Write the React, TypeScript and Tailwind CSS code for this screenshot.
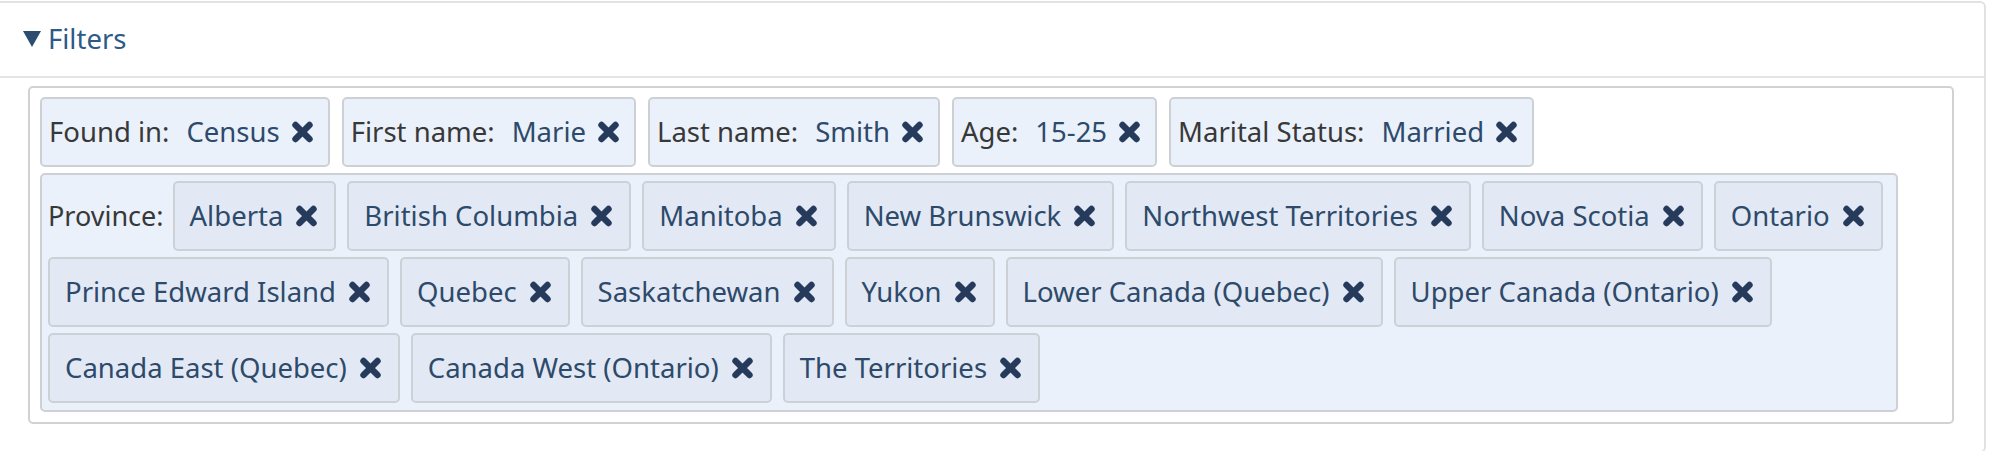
import React from 'react';

const RemoveIcon = () => (
  <svg width="23" height="22" viewBox="0 0 23 22" className="shrink-0">
    <path d="M4.5 4 L18.5 18 M18.5 4 L4.5 18" stroke="#263b5c" strokeWidth="6.4" strokeLinecap="round" fill="none" />
  </svg>
);

const fieldFilters = [
  { label: 'Found in:', value: 'Census' },
  { label: 'First name:', value: 'Marie' },
  { label: 'Last name:', value: 'Smith' },
  { label: 'Age:', value: '15-25' },
  { label: 'Marital Status:', value: 'Married' },
];

const provinces = [
  'Alberta',
  'British Columbia',
  'Manitoba',
  'New Brunswick',
  'Northwest Territories',
  'Nova Scotia',
  'Ontario',
  'Prince Edward Island',
  'Quebec',
  'Saskatchewan',
  'Yukon',
  'Lower Canada (Quebec)',
  'Upper Canada (Ontario)',
  'Canada East (Quebec)',
  'Canada West (Ontario)',
  'The Territories',
];

const FieldChip = ({ label, value }: { label: string; value: string }) => (
  <div className="h-[70px] flex items-center pl-[7px] pr-[14px] bg-[#eaf1fb] border-2 border-[#cdd1d6] rounded-[5px] whitespace-nowrap">
    <span className="text-[#383838]">{label}</span>
    <span className="ml-[17px] text-[#2e4a6b]">{value}</span>
    <span className="ml-[11px]">
      <RemoveIcon />
    </span>
  </div>
);

const ProvinceChip = ({ name }: { name: string }) => (
  <div className="h-[70px] flex items-center pl-[15px] pr-[16px] bg-[#e2e9f4] border-2 border-[#cdd1d6] rounded-[5px] whitespace-nowrap">
    <span className="text-[#2e4a6b]">{name}</span>
    <span className="ml-[12px]">
      <RemoveIcon />
    </span>
  </div>
);

export default function App() {
  return (
    <div className="w-[1999px] h-[451px] overflow-hidden bg-white pt-px pr-[13px] font-['Noto_Sans','Open_Sans',sans-serif] text-[27.5px]">
      <div className="h-[452px] border-2 border-l-0 border-[#e2e2e2] rounded-r-[6px] flex flex-col">
        <div className="h-[75px] border-b-2 border-[#e4e4e4] flex items-center pl-[23px] pb-[2px]">
          <svg width="18" height="16" viewBox="0 0 18 16" className="mr-[7px]">
            <path d="M0 0 H18 L9 16 Z" fill="#2b4d70" />
          </svg>
          <span className="text-[#2d5a86] leading-none">Filters</span>
        </div>
        <div className="pt-[8px] pl-[28px] pr-[30px]">
          <div className="border-2 border-[#d2d2d2] rounded-[5px] bg-white pt-[9px] pl-[10px] pb-[10px]">
            <div className="flex gap-[12px]">
              {fieldFilters.map((f) => (
                <FieldChip key={f.label} label={f.label} value={f.value} />
              ))}
            </div>
            <div className="mt-[6px] w-[1858px] bg-[#eaf1fb] border-2 border-[#cdd1d6] rounded-[5px] pt-[6px] pb-[7px] pl-[6px] flex flex-wrap items-center gap-x-[11px] gap-y-[6px]">
              <span className="text-[#383838] text-[27px] -mr-[2px]">Province:</span>
              {provinces.map((p) => (
                <ProvinceChip key={p} name={p} />
              ))}
            </div>
          </div>
        </div>
      </div>
    </div>
  );
}
